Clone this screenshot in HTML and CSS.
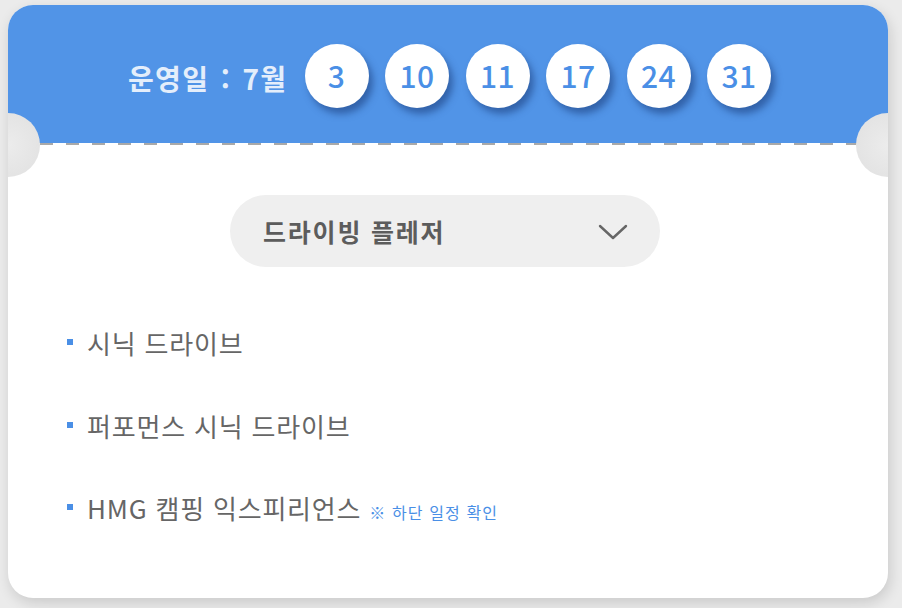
FILE: index.html
```html
<!DOCTYPE html>
<html lang="ko">
<head>
<meta charset="utf-8">
<link rel="stylesheet" href="styles.css">
</head>
<body>
<div class="ticket">
  <header class="head">
    <span class="label">운영일 : 7월</span>
    <ul class="days">
      <li class="day">3</li>
      <li class="day">10</li>
      <li class="day">11</li>
      <li class="day">17</li>
      <li class="day">24</li>
      <li class="day">31</li>
    </ul>
  </header>
  <section class="body">
    <div class="select">
      <span class="select-text">드라이빙 플레저</span>
      <svg class="chev" width="30" height="16" viewBox="0 0 30 16"><path d="M2 2 L15 14 L28 2" fill="none" stroke="#666" stroke-width="2.4" stroke-linecap="round" stroke-linejoin="round"/></svg>
    </div>
    <ul class="list">
      <li class="item">시닉 드라이브</li>
      <li class="item">퍼포먼스 시닉 드라이브</li>
      <li class="item">HMG 캠핑 익스피리언스 <span class="note">※ 하단 일정 확인</span></li>
    </ul>
  </section>
  <span class="notch notch-left"></span>
  <span class="notch notch-right"></span>
</div>
</body>
</html>
```

FILE: styles.css
```css
* { box-sizing: border-box; }
html, body { margin: 0; padding: 0; }
body {
  background: #ebebeb;
  font-family: "Noto Sans CJK KR", "Noto Sans", sans-serif;
  width: 902px;
  height: 608px;
  overflow: hidden;
}
.ticket {
  position: relative;
  margin: 5px 0 0 8px;
  width: 880px;
  height: 593px;
  border-radius: 25px;
  background: #fff;
  overflow: hidden;
  box-shadow: 2px 5px 14px rgba(0, 0, 0, 0.14);
}
.head {
  height: 138px;
  background: #5194e7;
  display: flex;
  align-items: center;
  justify-content: center;
  padding-left: 3px;
  padding-top: 4px;
}
.label {
  color: #e4eefb;
  font-size: 28px;
  font-weight: 700;
  letter-spacing: 1.4px;
  word-spacing: 2px;
  margin-right: 17px;
  margin-top: 4px;
}
.days {
  list-style: none;
  margin: 0;
  padding: 0;
  display: flex;
  gap: 16.5px;
}
.day {
  width: 64px;
  height: 64px;
  border-radius: 50%;
  background: #fff;
  color: #4a8fe6;
  font-size: 30px;
  font-weight: 500;
  letter-spacing: 0.5px;
  display: flex;
  align-items: center;
  justify-content: center;
  box-shadow: 4px 6px 7px rgba(20, 50, 110, 0.5);
  padding-bottom: 2px;
}
.body {
  border-top: 3px solid transparent;
  background-image: repeating-linear-gradient(90deg, #a9a9a9 0 13px, transparent 13px 26px);
  background-size: 100% 2px;
  background-repeat: no-repeat;
  background-position: 6px 0;
  background-origin: border-box;
  padding-top: 49px;
}
.select {
  width: 430px;
  height: 72px;
  margin: 0 0 0 222px;
  border-radius: 36px;
  background: #efefef;
  display: flex;
  align-items: center;
  justify-content: space-between;
  padding: 0 32px 0 33px;
}
.select-text {
  font-size: 25px;
  font-weight: 700;
  color: #5c5c5c;
  letter-spacing: 1.8px;
}
.chev { margin-top: 2px; }
.list {
  list-style: none;
  margin: 58px 0 0;
  padding: 0 0 0 59px;
}
.item {
  position: relative;
  padding-left: 20px;
  height: 36px;
  line-height: 36px;
  margin-bottom: 46.5px;
  font-size: 26px;
  color: #666;
  letter-spacing: 0.8px;
}
.item::before {
  content: "";
  position: absolute;
  left: 0;
  top: 14px;
  width: 6px;
  height: 6px;
  background: #4a8fe6;
}
.note {
  font-size: 16px;
  color: #4a8fe6;
  letter-spacing: 1.1px;
}
.notch {
  position: absolute;
  top: 108px;
  width: 64px;
  height: 64px;
  border-radius: 50%;
  background: radial-gradient(circle at 50% 50%, #ececec 0%, #e0e0e0 100%);
}
.notch-left { left: -32px; }
.notch-right { right: -32px; }
```
